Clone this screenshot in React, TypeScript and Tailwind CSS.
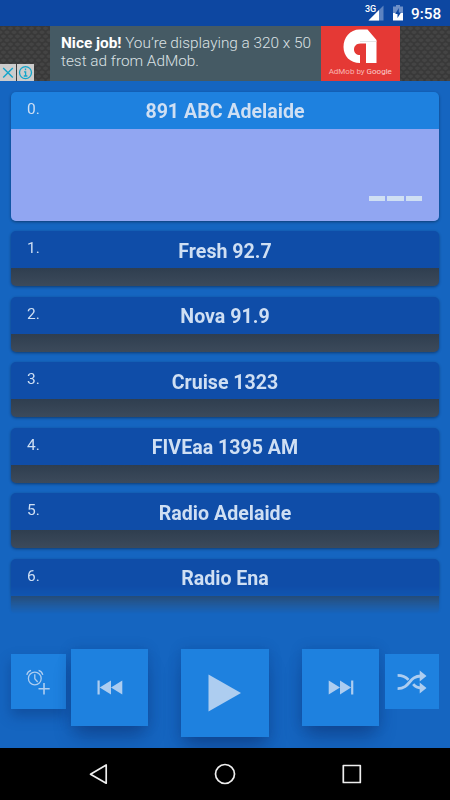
interface Station {
  id: number;
  name: string;
}

const stations: Station[] = [
  { id: 1, name: "Fresh 92.7" },
  { id: 2, name: "Nova 91.9" },
  { id: 3, name: "Cruise 1323" },
  { id: 4, name: "FIVEaa 1395 AM" },
  { id: 5, name: "Radio Adelaide" },
  { id: 6, name: "Radio Ena" },
];

function StatusBar() {
  return (
    <div className="relative flex h-[26px] shrink-0 items-center bg-[#0d47a1] text-white">
      <span className="absolute left-[365px] top-[3px] text-[9px] leading-3 font-medium">3G</span>
      <svg className="absolute left-[368px] top-[5px]" width="17" height="17" viewBox="0 0 17 17">
        <path d="M15.5 0.5V15.5H0.5Z" fill="#5d83c0" />
        <path d="M11 5V15.5H0.5Z" fill="#fff" />
      </svg>
      <svg className="absolute left-[393px] top-[5px]" width="10" height="16" viewBox="0 0 10 16">
        <path d="M3 0h4v1.6h3V8H0V1.6h3Z" fill="#6e90c8" />
        <path d="M0 8h10v7.5H0Z" fill="#fff" />
        <path d="M5.8 3L2.2 9h2.3v4L8 7.5H5.8Z" fill="#0d47a1" />
      </svg>
      <span className="absolute left-[411px] top-[4px] text-[15.3px] leading-5 font-medium">9:58</span>
    </div>
  );
}

// dark strip with the small hexagon grid on both sides of the banner
function Mesh({ id }: { id: string }) {
  return (
    <svg className="h-[55px] w-full" aria-hidden="true">
      <defs>
        <pattern id={id} width="7" height="8" patternUnits="userSpaceOnUse">
          <rect width="7" height="8" fill="#393939" />
          <path d="M3.5 0.4l2.3 1.2v1.4l-2.3 1.2l-2.3-1.2V1.6ZM0 4.4l2.3 1.2v1.4L0 8.2ZM7 4.4L4.7 5.6v1.4L7 8.2Z" fill="#444444" />
        </pattern>
      </defs>
      <rect width="100%" height="100%" fill={`url(#${id})`} />
    </svg>
  );
}

function AdBanner() {
  return (
    <div className="flex h-[55px] shrink-0 text-[#dce2e5]">
      <div className="relative w-[50px]">
        <Mesh id="mesh-left" />
        <div className="absolute bottom-0 left-0 flex gap-px">
          <svg className="bg-[#cccccc]" width="16" height="17" viewBox="0 0 16 17">
            <path d="M3.2 4l9.6 9.6M12.8 4L3.2 13.6" stroke="#12a5cb" strokeWidth="1.4" />
          </svg>
          <svg className="bg-[#cccccc]" width="17" height="17" viewBox="0 0 17 17">
            <circle cx="8.5" cy="8.6" r="6" fill="none" stroke="#12a5cb" strokeWidth="1.3" />
            <path d="M8.5 4.6v1.6M7 7.8h1.6v4M6.8 12h3.6" fill="none" stroke="#12a5cb" strokeWidth="1.3" />
          </svg>
        </div>
      </div>
      <div className="w-[270.5px] whitespace-nowrap bg-[#455a64] pl-[11px] pt-[8px] text-[15.35px] leading-[18px] font-light">
        <p><b className="font-bold text-white">Nice job!</b> You’re displaying a 320 x 50</p>
        <p>test ad from AdMob.</p>
      </div>
      <div className="flex w-[79.5px] flex-col items-center bg-[#e53935]">
        <svg className="mt-[3px]" width="36" height="36" viewBox="0 0 36 36">
          <path d="M17.5 0.5H25.5L34.5 11V34H24V14.5H18.5C14 14.5 12 17.5 12 20.5C12 24 14.5 26 18 26V34C8 34 1.5 27 1.5 18C1.5 8.5 8 0.5 17.5 0.5Z" fill="#fff" />
          <path d="M18 12.5H34.5" stroke="#ddd" strokeWidth="0.8" />
        </svg>
        <span className="text-[8px] leading-[14px] whitespace-nowrap text-[#f9b6b3]">
          AdMob by <span className="text-[#fbcfcd]">Google</span>
        </span>
      </div>
      <div className="flex-1">
        <Mesh id="mesh-right" />
      </div>
    </div>
  );
}

function CardHeader({ id, name }: Station) {
  return (
    <div className="relative flex h-[37px] items-center justify-center text-[#cfdff3]">
      <span className="absolute left-4 top-[7px] text-[15.5px] leading-5">{id}.</span>
      <h2 className="pt-[4px] text-[19.6px] leading-6 font-bold">{name}</h2>
    </div>
  );
}

function StationCard({ id, name }: Station) {
  return (
    <li className="h-[55px] shrink-0 overflow-hidden rounded-[5px] bg-[#0f4da8] shadow-[0_1px_3px_rgba(0,0,0,0.4)]">
      <CardHeader id={id} name={name} />
      <div className="h-[18px] bg-linear-to-b from-[#2f3e4f] to-[#3c4a5b]" />
    </li>
  );
}

function Controls() {
  return (
    <div className="flex h-[107px] shrink-0 items-start justify-between px-[11px] pt-[8px] text-[#adcdf0]">
      <div className="flex items-start gap-[5.5px]">
        <button className="mt-[5px] flex h-[55px] w-[54.5px] items-center justify-center bg-[#1e81df] shadow-[0_7px_12px_rgba(10,40,100,0.35)]">
          <svg width="24" height="26" viewBox="0 0 24 26" fill="none" stroke="currentColor" strokeWidth="1.3">
            <circle cx="8.8" cy="9.5" r="6.4" />
            <path d="M8.8 5.3V9.8l2.9 3.2M0.8 5.8Q1.6 2.6 5 1.4M12.6 1.4Q16 2.6 16.8 5.8" />
            <path d="M18 14v11.5M12.5 19.7h11.2" strokeWidth="1.6" />
          </svg>
        </button>
        <button className="flex h-[76.5px] w-[77px] items-center justify-center bg-[#1e81df] shadow-[0_14px_18px_-4px_rgba(10,40,100,0.45),0_0_12px_rgba(10,40,100,0.2)]">
          <svg width="26" height="15" viewBox="0 0 26 15" fill="currentColor">
            <path d="M0.5 0.5h2.2V14.5H0.5ZM14 0.5V14.5L2.7 7.5ZM25.3 0.5V14.5L14 7.5Z" />
          </svg>
        </button>
      </div>
      <button className="h-[88px] w-[88px] bg-[#1e81df] shadow-[0_14px_18px_-4px_rgba(10,40,100,0.45),0_0_12px_rgba(10,40,100,0.2)]">
        <svg width="88" height="88" viewBox="0 0 88 88">
          <path d="M27.5 25.5V62.5L60 44Z" fill="currentColor" />
        </svg>
      </button>
      <div className="flex items-start gap-[5.5px]">
        <button className="flex h-[76.5px] w-[77px] items-center justify-center bg-[#1e81df] shadow-[0_14px_18px_-4px_rgba(10,40,100,0.45),0_0_12px_rgba(10,40,100,0.2)]">
          <svg width="26" height="15" viewBox="0 0 26 15" fill="currentColor">
            <path d="M23.1 0.5h2.2V14.5h-2.2ZM0.7 0.5V14.5L12 7.5ZM12 0.5V14.5L23.1 7.5Z" />
          </svg>
        </button>
        <button className="mt-[5px] flex h-[55px] w-[54.5px] items-center justify-center bg-[#1e81df]">
          <svg width="30" height="24" viewBox="0 0 30 24">
            <g fill="none" stroke="currentColor" strokeWidth="2.8">
              <path d="M0.6 18.6C13.5 18.6 11.5 6 24 6" />
              <path d="M0.6 5.3C6.5 5.3 9 7 11.5 9.9M16.2 14.2C18.3 16.7 20 18 24 18" />
            </g>
            <path d="M22.7 0.4V11.6L29.5 6ZM22.7 12.4V23.6L29.5 18Z" fill="currentColor" />
          </svg>
        </button>
      </div>
    </div>
  );
}

function NavBar() {
  return (
    <div className="flex h-[52px] shrink-0 items-center bg-black px-[87px]">
      <svg width="276" height="24" viewBox="0 0 276 24" fill="none" stroke="#eee" strokeWidth="1.7" strokeLinejoin="round">
        <path d="M19.2 3V21.2L3.5 12.2Z" />
        <circle cx="138" cy="12" r="9.5" />
        <rect x="256.3" y="3.5" width="17" height="17" />
      </svg>
    </div>
  );
}

export default function App() {
  return (
    <div className="flex h-[800px] w-[450px] flex-col overflow-hidden bg-[#1565c0] font-[Roboto,sans-serif]">
      <StatusBar />
      <AdBanner />

      {/* Station list, fades out at the bottom edge */}
      <ul className="flex h-[533px] shrink-0 flex-col gap-[10.5px] overflow-hidden px-[11px] pt-[10.6px] mask-[linear-gradient(to_bottom,#000_505px,transparent_533px)]">
        <li className="h-[129px] shrink-0 overflow-hidden rounded-[5px] bg-[#1e81df] shadow-[0_1px_3px_rgba(0,0,0,0.4)]">
          <CardHeader id={0} name="891 ABC Adelaide" />
          <div className="flex h-[92px] items-end justify-end gap-[2px] bg-[#91a6f2] pr-[17px] pb-[20px]">
            <span className="h-[5px] w-[16.5px] bg-[#cfdff3]" />
            <span className="h-[5px] w-[16.5px] bg-[#cfdff3]" />
            <span className="h-[5px] w-[16.5px] bg-[#cfdff3]" />
          </div>
        </li>
        {stations.map((s) => (
          <StationCard key={s.id} id={s.id} name={s.name} />
        ))}
      </ul>

      <div className="min-h-0 flex-1" />
      <Controls />
      <NavBar />
    </div>
  );
}
